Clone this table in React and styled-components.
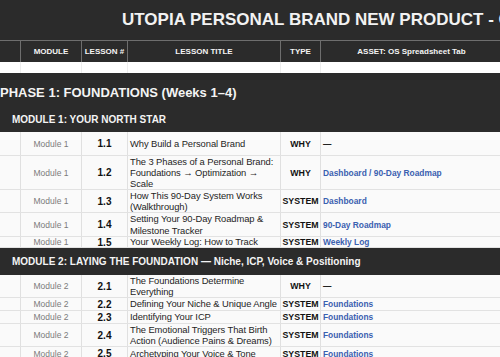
import styled, { createGlobalStyle } from 'styled-components'

const GlobalStyle = createGlobalStyle`
  html, body {
    margin: 0;
    padding: 0;
    background: #ffffff;
    overflow: hidden;
  }
  body {
    font-family: "Liberation Sans", Arial, sans-serif;
  }
`

const COLS = '21px 61px 46px 153px 40px 182px'
const DARK = '#2b2b2b'

const Sheet = styled.div`
  width: 640px;
  color: #222;
`

const TitleBar = styled.div`
  height: 40px;
  background: ${DARK};
  display: flex;
  align-items: center;
  padding-left: 122px;
  color: #f2f2f2;
  font-size: 17px;
  font-weight: bold;
  white-space: nowrap;
`

const HeaderRow = styled.div`
  display: grid;
  grid-template-columns: ${COLS};
  height: 22px;
  background: ${DARK};
  border-top: 1px solid #6e6e6e;
  box-sizing: border-box;
`

const HeadCell = styled.div`
  border-right: 1px solid #6e6e6e;
  color: #f4f4f4;
  font-size: 8px;
  font-weight: bold;
  display: flex;
  align-items: center;
  justify-content: center;
  white-space: nowrap;
`

const SpacerRow = styled.div`
  display: grid;
  grid-template-columns: ${COLS};
  height: 11px;
  background: #fff;
  & > div {
    border-right: 1px solid #eeeeee;
  }
`

const PhaseBand = styled.div`
  height: 33px;
  background: ${DARK};
  color: #f4f4f4;
  font-size: 13px;
  font-weight: bold;
  display: flex;
  align-items: center;
  padding-top: 6px;
  box-sizing: border-box;
  white-space: nowrap;
`

const ModuleBand = styled.div`
  height: ${p => p.$h}px;
  background: ${DARK};
  color: #f4f4f4;
  font-size: 10px;
  font-weight: bold;
  display: flex;
  align-items: center;
  padding-left: 12px;
  white-space: nowrap;
`

const LessonRow = styled.div`
  display: grid;
  grid-template-columns: ${COLS};
  height: ${p => p.$h}px;
  background: #fafafa;
  border-bottom: 1px solid #e2e2e2;
  box-sizing: border-box;
  overflow: hidden;
`

const Cell = styled.div`
  border-right: 1px solid #e0e0e0;
  display: flex;
  align-items: center;
  justify-content: ${p => (p.$left ? 'flex-start' : 'center')};
  padding: ${p => (p.$left ? '0 0 0 2px' : '0 2px')};
  overflow: hidden;
`

const ModuleText = styled.span`
  color: #7a7a7a;
  font-size: 8.5px;
  white-space: nowrap;
`

const NumText = styled.span`
  color: #111;
  font-size: 10px;
  font-weight: bold;
`

const LessonTitle = styled.span`
  color: #1e1e1e;
  font-size: 9.4px;
  line-height: 11.3px;
  letter-spacing: -0.08px;
`

const TypeText = styled.span`
  color: #111;
  font-size: 8.8px;
  font-weight: bold;
  white-space: nowrap;
`

const AssetText = styled.span`
  color: ${p => (p.$link ? '#3a60b0' : '#222')};
  font-size: 8.4px;
  font-weight: bold;
  white-space: nowrap;
`

const headers = ['', 'MODULE', 'LESSON #', 'LESSON TITLE', 'TYPE', 'ASSET: OS Spreadsheet Tab']

const module1 = [
  { n: '1.1', t: 'Why Build a Personal Brand', type: 'WHY', asset: '—', h: 24 },
  { n: '1.2', t: 'The 3 Phases of a Personal Brand: Foundations → Optimization → Scale', type: 'WHY', asset: 'Dashboard / 90-Day Roadmap', h: 34 },
  { n: '1.3', t: 'How This 90-Day System Works (Walkthrough)', type: 'SYSTEM', asset: 'Dashboard', h: 23 },
  { n: '1.4', t: 'Setting Your 90-Day Roadmap & Milestone Tracker', type: 'SYSTEM', asset: '90-Day Roadmap', h: 24 },
  { n: '1.5', t: 'Your Weekly Log: How to Track', type: 'SYSTEM', asset: 'Weekly Log', h: 11 },
]

const module2 = [
  { n: '2.1', t: 'The Foundations Determine Everything', type: 'WHY', asset: '—', h: 23 },
  { n: '2.2', t: 'Defining Your Niche & Unique Angle', type: 'SYSTEM', asset: 'Foundations', h: 13 },
  { n: '2.3', t: 'Identifying Your ICP', type: 'SYSTEM', asset: 'Foundations', h: 13 },
  { n: '2.4', t: 'The Emotional Triggers That Birth Action (Audience Pains & Dreams)', type: 'SYSTEM', asset: 'Foundations', h: 23 },
  { n: '2.5', t: 'Archetyping Your Voice & Tone', type: 'SYSTEM', asset: 'Foundations', h: 14 },
]

function Lessons({ mod, rows }) {
  return rows.map(r => (
    <LessonRow key={r.n} $h={r.h}>
      <Cell />
      <Cell><ModuleText>{mod}</ModuleText></Cell>
      <Cell><NumText>{r.n}</NumText></Cell>
      <Cell $left><LessonTitle>{r.t}</LessonTitle></Cell>
      <Cell><TypeText>{r.type}</TypeText></Cell>
      <Cell $left><AssetText $link={r.asset !== '—'}>{r.asset}</AssetText></Cell>
    </LessonRow>
  ))
}

export default function App() {
  return (
    <>
      <GlobalStyle />
      <Sheet>
        <TitleBar>UTOPIA PERSONAL BRAND NEW PRODUCT - OS CURRICULUM</TitleBar>
        <HeaderRow>
          {headers.map((h, i) => <HeadCell key={i}>{h}</HeadCell>)}
        </HeaderRow>
        <SpacerRow>
          {headers.map((h, i) => <div key={i} />)}
        </SpacerRow>
        <PhaseBand>PHASE 1: FOUNDATIONS (Weeks 1–4)</PhaseBand>
        <ModuleBand $h={26}>MODULE 1: YOUR NORTH STAR</ModuleBand>
        <Lessons mod="Module 1" rows={module1} />
        <ModuleBand $h={27}>MODULE 2: LAYING THE FOUNDATION — Niche, ICP, Voice &amp; Positioning</ModuleBand>
        <Lessons mod="Module 2" rows={module2} />
      </Sheet>
    </>
  )
}
